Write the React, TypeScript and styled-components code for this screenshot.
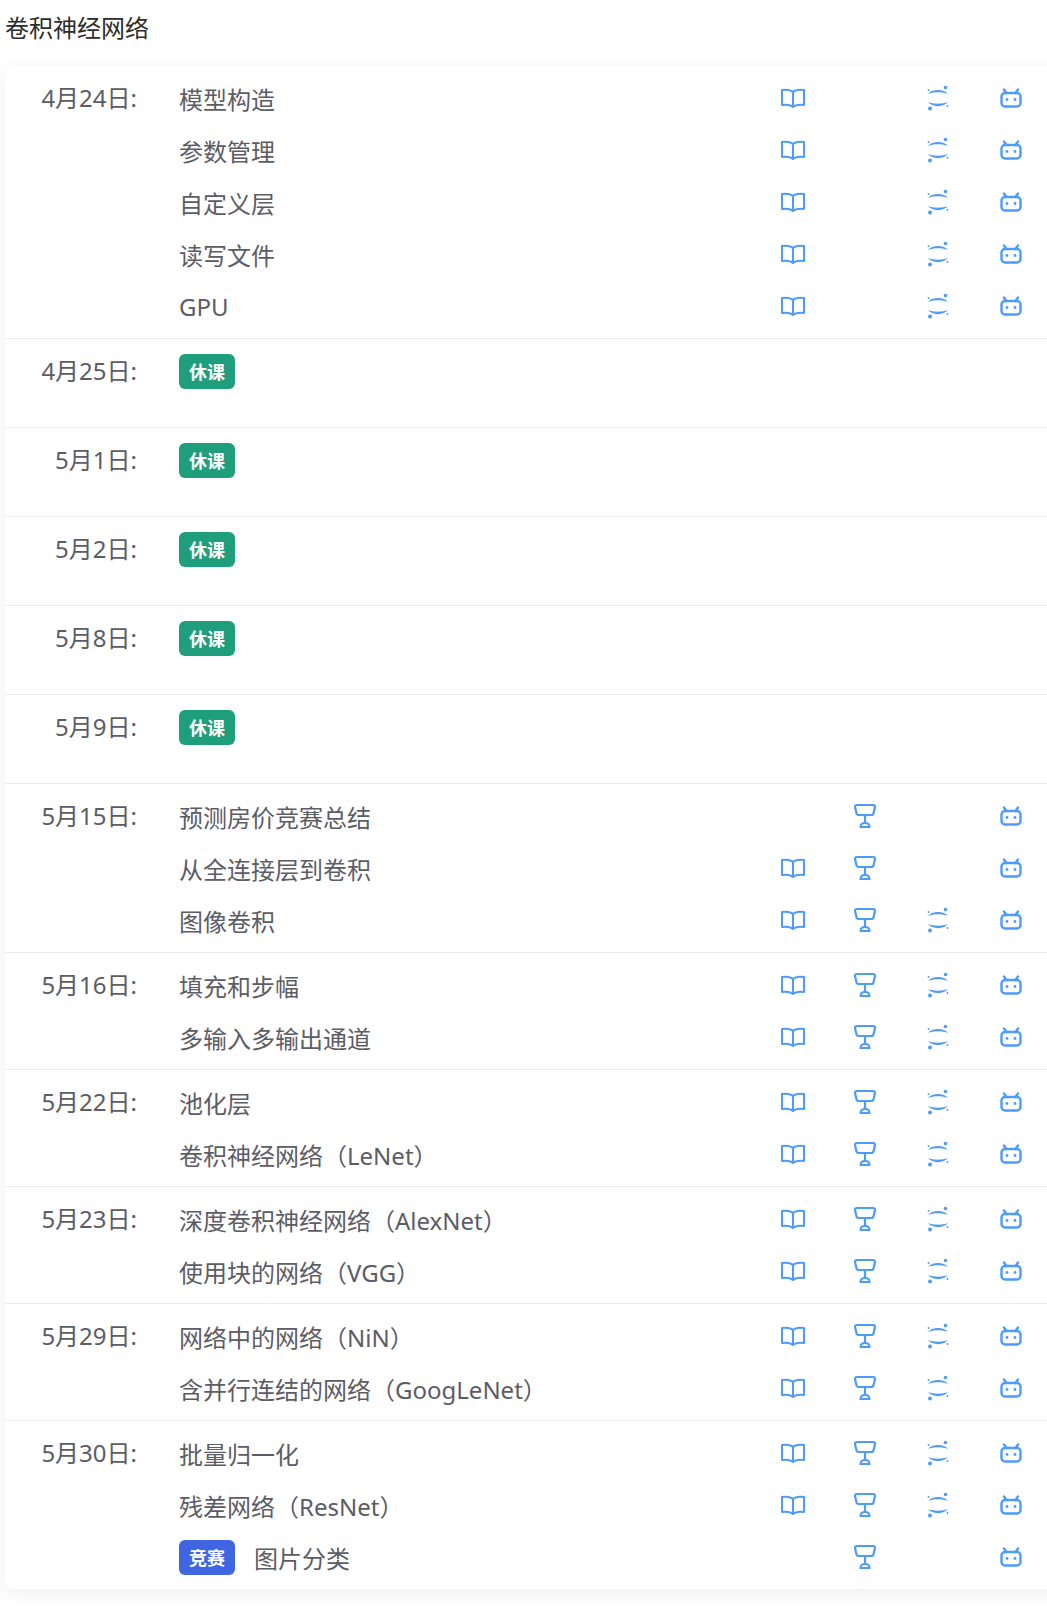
import React from "react";
import styled, { createGlobalStyle } from "styled-components";

const Global = createGlobalStyle`
  html, body { margin: 0; padding: 0; background: #fff; overflow-x: hidden; }
  body { font-family: "Noto Sans", "Noto Sans CJK SC", sans-serif; }
`;

const Page = styled.div`
  padding: 0 0 36px 5px;
  overflow: hidden;
`;

const Title = styled.div`
  font-size: 24px;
  line-height: 32px;
  height: 66px;
  padding-top: 12px;
  box-sizing: border-box;
  color: #2c2c2c;
`;

const Card = styled.div`
  width: 1060px;
  background: #fff;
  border-radius: 8px;
  box-shadow: 0 4px 18px rgba(0, 0, 0, 0.07);
`;

const Section = styled.div<{ $rest?: boolean }>`
  display: grid;
  grid-template-columns: 132px 1fr;
  column-gap: 42px;
  padding: 6px 0 ${(p) => (p.$rest ? "30px" : "6px")};
  & + & { border-top: 1px solid #ebebeb; }
`;

const DateLabel = styled.div`
  font-size: 24px;
  line-height: 52px;
  height: 52px;
  text-align: right;
  color: #5c5c66;
  white-space: nowrap;
`;

const Rows = styled.div`
  display: flex;
  flex-direction: column;
`;

const Row = styled.div`
  display: flex;
  align-items: center;
  height: 52px;
  width: 868px;
`;

const Name = styled.div`
  flex: 1;
  display: flex;
  align-items: center;
  gap: 19px;
  font-size: 24px;
  color: #5c5c66;
  white-space: nowrap;
`;

const Badge = styled.span<{ $color: string }>`
  display: inline-flex;
  align-items: center;
  justify-content: center;
  width: 56px;
  height: 35px;
  border-radius: 6px;
  background: ${(p) => p.$color};
  color: #fff;
  font-size: 18px;
  font-weight: 700;
`;

const IconCell = styled.div`
  width: 72.7px;
  height: 32px;
  display: flex;
  align-items: center;
  justify-content: center;
`;

const Svg = styled.svg`
  display: block;
  fill: none;
  stroke: #4d9bfb;
`;

const Book = () => (
  <Svg width="26" height="22" viewBox="0 0 26 22" strokeWidth="2">
    <path d="M13 5C11 3 6 2.4 2 3v15c4-.5 9 0 11 2 2-2 7-2.500 11-2V3c-4-.6-9 0-11 2zM13 5v15" strokeLinejoin="round" />
  </Svg>
);

const Pin = () => (
  <Svg width="24" height="26" viewBox="0 0 24 26" strokeWidth="2.200">
    <path d="M4 2h16c1.500 0 2 1 2 2l-1.400 6c-.3 1.200-1 2-2.400 2H5.800c-1.400 0-2.100-.8-2.400-2L2 4c0-1 .5-2 2-2z" />
    <path d="M12 12v8" />
    <path d="M7.500 24c0-2.500 2-4 4.500-4s4.500 1.500 4.500 4z" strokeWidth="2" />
  </Svg>
);

const Discuss = () => (
  <Svg width="24" height="26" viewBox="0 0 24 26" stroke="none">
    <path d="M2 9C6 3.500 18 3.500 22 9 17 6.800 7 6.800 2 9z" fill="#4d9bfb" stroke="none" />
    <path d="M2 17c4 5.500 16 5.500 20 0-5 2.200-15 2.200-20 0z" fill="#4d9bfb" stroke="none" />
    <circle cx="19.500" cy="2.500" r="1.800" fill="#4d9bfb" stroke="none" />
    <circle cx="4" cy="23.500" r="2" fill="#4d9bfb" stroke="none" />
    <circle cx="2.500" cy="5" r=".9" fill="#4d9bfb" stroke="none" />
    <circle cx="21.500" cy="21" r=".9" fill="#4d9bfb" stroke="none" />
  </Svg>
);

const Tv = () => (
  <Svg width="22" height="20" viewBox="0 0 22 20" strokeWidth="2.400">
    <rect x="1.500" y="5" width="19" height="13.500" rx="3.500" />
    <path d="M6.500 5 4 1.500M15.500 5 18 1.500" strokeLinecap="round" />
    <circle cx="7" cy="11.500" r="1.400" fill="#4d9bfb" stroke="none" />
    <circle cx="15" cy="11.500" r="1.400" fill="#4d9bfb" stroke="none" />
  </Svg>
);

type Item = { name: string; icons: string; contest?: boolean };
type Day = { date: string; items: Item[] };

const FULL = "bpdt";
const days: Day[] = [
  { date: "4月24日:", items: ["模型构造", "参数管理", "自定义层", "读写文件", "GPU"].map((name) => ({ name, icons: "b-dt" })) },
  { date: "4月25日:", items: [] },
  { date: "5月1日:", items: [] },
  { date: "5月2日:", items: [] },
  { date: "5月8日:", items: [] },
  { date: "5月9日:", items: [] },
  { date: "5月15日:", items: [
    { name: "预测房价竞赛总结", icons: "-p-t" },
    { name: "从全连接层到卷积", icons: "bp-t" },
    { name: "图像卷积", icons: FULL },
  ] },
  { date: "5月16日:", items: [{ name: "填充和步幅", icons: FULL }, { name: "多输入多输出通道", icons: FULL }] },
  { date: "5月22日:", items: [{ name: "池化层", icons: FULL }, { name: "卷积神经网络（LeNet）", icons: FULL }] },
  { date: "5月23日:", items: [{ name: "深度卷积神经网络（AlexNet）", icons: FULL }, { name: "使用块的网络（VGG）", icons: FULL }] },
  { date: "5月29日:", items: [{ name: "网络中的网络（NiN）", icons: FULL }, { name: "含并行连结的网络（GoogLeNet）", icons: FULL }] },
  { date: "5月30日:", items: [
    { name: "批量归一化", icons: FULL },
    { name: "残差网络（ResNet）", icons: FULL },
    { name: "图片分类", icons: "-p-t", contest: true },
  ] },
];

const iconFor = (c: string) =>
  c === "b" ? <Book /> : c === "p" ? <Pin /> : c === "d" ? <Discuss /> : c === "t" ? <Tv /> : null;

export default function App() {
  return (
    <Page>
      <Global />
      <Title>卷积神经网络</Title>
      <Card>
        {days.map((d) => (
          <Section key={d.date} $rest={d.items.length === 0}>
            <DateLabel>{d.date}</DateLabel>
            <Rows>
              {d.items.length === 0 ? (
                <Row>
                  <Name>
                    <Badge $color="#1f9e7c">休课</Badge>
                  </Name>
                </Row>
              ) : (
                d.items.map((it) => (
                  <Row key={it.name}>
                    <Name>
                      {it.contest && <Badge $color="#3f66e0">竞赛</Badge>}
                      {it.name}
                    </Name>
                    {it.icons.split("").map((c, i) => (
                      <IconCell key={i}>{iconFor(c)}</IconCell>
                    ))}
                  </Row>
                ))
              )}
            </Rows>
          </Section>
        ))}
      </Card>
    </Page>
  );
}
